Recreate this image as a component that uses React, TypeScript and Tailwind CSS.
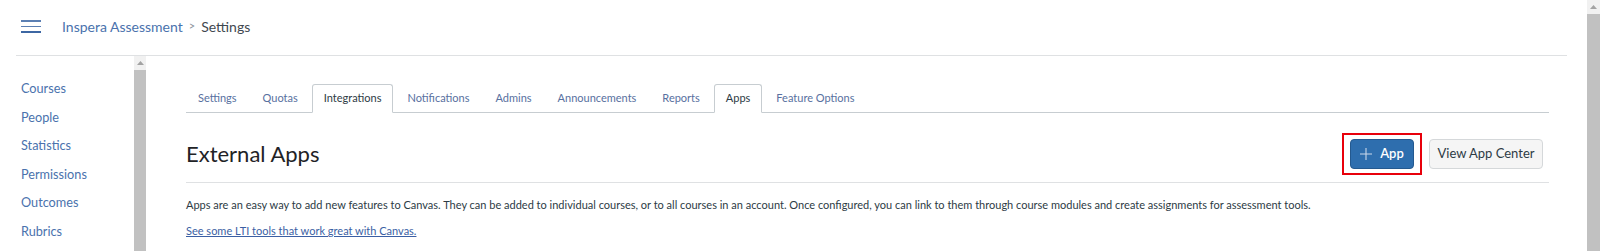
import React from "react";

const sidebarLinks = ["Courses", "People", "Statistics", "Permissions", "Outcomes", "Rubrics"];
const tabs = ["Settings", "Quotas", "Integrations", "Notifications", "Admins", "Announcements", "Reports", "Apps", "Feature Options"];
const activeTabs = ["Integrations", "Apps"];

export default function App() {
  return (
    <div className="relative flex h-[251px] w-[1600px] overflow-hidden bg-white font-['Lato','Noto_Sans',sans-serif] text-[#2d3b45]">
      <div className="flex w-[1587px] flex-col">
        {/* header */}
        <header className="ml-4 mr-5 flex h-[56px] shrink-0 items-center border-b border-[#dfe1e3] pb-[3px]">
          <div className="ml-[5px] mt-[1px] flex w-[20px] flex-col gap-[4px]">
            <span className="block h-[1.5px] w-[20px] bg-[#5b7fb3]" />
            <span className="block h-[1.5px] w-[20px] bg-[#5b7fb3]" />
            <span className="block h-[1.5px] w-[20px] bg-[#3d67a3]" />
          </div>
          <nav className="ml-[21px] flex items-center text-[14px]">
            <span className="text-[#4a72ad]">Inspera Assessment</span>
            <span className="mx-[6px] text-[11px] text-[#8a939b]">&gt;</span>
            <span className="text-[#3f4850]">Settings</span>
          </nav>
        </header>

        <div className="flex flex-1 overflow-hidden">
          {/* sidebar */}
          <aside className="w-[134px] shrink-0 pl-[21px] pt-[18px]">
            <ul className="text-[12.7px] leading-[28.6px] text-[#4a72ad]">
              {sidebarLinks.map((l) => (
                <li key={l}>{l}</li>
              ))}
            </ul>
          </aside>
          {/* sidebar scrollbar */}
          <div className="flex w-[12px] shrink-0 flex-col bg-[#f1f1f1]">
            <div className="flex h-[14px] items-center justify-center">
              <svg width="7" height="4" viewBox="0 0 7 4">
                <path d="M0 4 L3.5 0 L7 4 Z" fill="#a3a3a3" />
              </svg>
            </div>
            <div className="flex-1 bg-[#c1c1c1]" />
          </div>

          {/* main */}
          <main className="w-[1441px] shrink-0 pl-[40px] pr-[38px] pt-[28px]">
            <div className="flex border-b border-[#c7cdd1] text-[11px]">
              {tabs.map((t) => {
                const active = activeTabs.includes(t);
                return (
                  <div
                    key={t}
                    className={
                      active
                        ? "-mb-px mr-[2px] flex h-[29px] items-center rounded-t-[3px] border border-[#c7cdd1] border-b-white bg-white px-[11px] pb-[1px] text-[#2d3b45]"
                        : "-mb-px mr-[2px] flex h-[29px] items-center border border-transparent px-[11px] pb-[1px] text-[#5870a0]"
                    }
                  >
                    {t}
                  </div>
                );
              })}
            </div>

            <div className="flex h-[70px] items-center justify-between border-b border-[#dfe1e3] pt-[13px]">
              <h1 className="text-[22px] font-normal leading-none text-[#1f2326]">External Apps</h1>
              <div className="flex items-center pr-[6px]">
                <div className="border-2 border-[#e8000b] px-[6px] py-[4px]">
                  <button className="flex h-[30px] w-[64px] items-center justify-center gap-[8px] rounded-[4px] border border-[#24598f] bg-[#2e6eae] text-[13px] text-white">
                    <svg width="12" height="12" viewBox="0 0 12 12">
                      <path d="M6 0 V12 M0 6 H12" stroke="#c9d8ea" strokeWidth="1.1" />
                    </svg>
                    <span className="font-semibold">App</span>
                  </button>
                </div>
                <button className="ml-[7px] flex h-[30px] w-[114px] items-center justify-center rounded-[4px] border border-[#d5d8da] bg-[#f5f5f5] text-[13px] text-[#2d3b45]">
                  View App Center
                </button>
              </div>
            </div>

            <p className="mt-[14px] text-[11px] leading-[16px] text-[#2d3b45]">
              Apps are an easy way to add new features to Canvas. They can be added to individual courses, or to all courses in an account. Once configured, you can link to them through course modules and create assignments for assessment tools.
            </p>
            <p className="mt-[10px] text-[11px] leading-[16px]">
              <a className="text-[#3b5fa4] underline">See some LTI tools that work great with Canvas.</a>
            </p>
          </main>
        </div>
      </div>

      {/* page scrollbar */}
      <div className="flex w-[13px] shrink-0 flex-col bg-[#f1f1f1]">
        <div className="flex h-[14px] items-center justify-center">
          <svg width="7" height="4" viewBox="0 0 7 4">
            <path d="M0 4 L3.5 0 L7 4 Z" fill="#a3a3a3" />
          </svg>
        </div>
        <div className="flex-1 bg-[#c1c1c1]" />
      </div>
    </div>
  );
}
